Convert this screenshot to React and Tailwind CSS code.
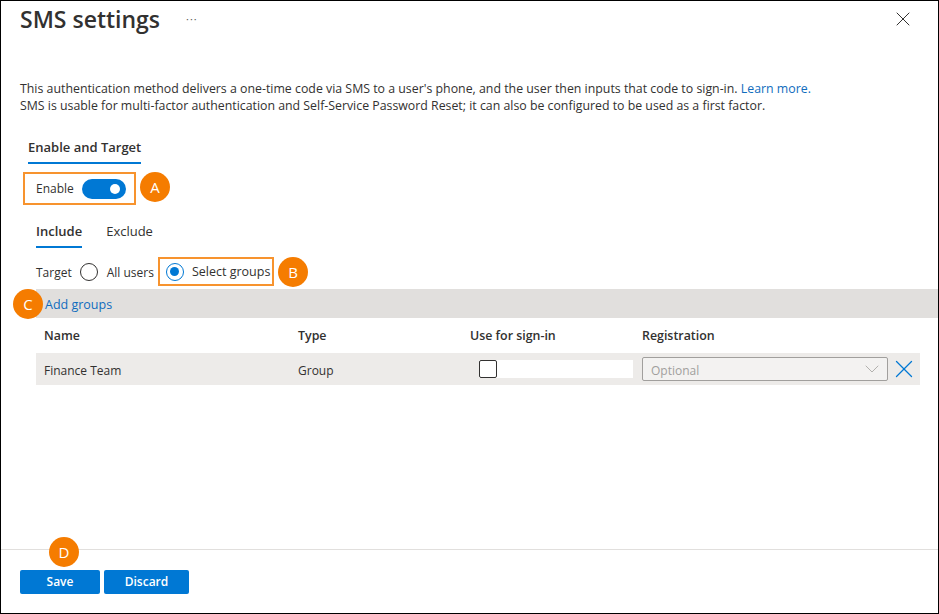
import { X, ChevronDown } from 'lucide-react';

function Badge({ letter, className }) {
    return (
        <span className={`absolute flex size-[30px] items-center justify-center rounded-full bg-[#f57c00] text-[15px] text-white ${className}`}>
            {letter}
        </span>
    );
}

export default function App() {
    return (
        <div className="flex h-[614px] w-[939px] flex-col overflow-hidden border border-black bg-white font-['Open_Sans',sans-serif] text-[12px] text-[#323130]">
            <div className="flex h-[36px] items-center pl-[19px] pr-[23px]">
                <h1 className="text-[23px] leading-none font-semibold">SMS settings</h1>
                <span className="mb-[2px] ml-[26px] text-[11px] leading-none tracking-[1px] text-[#605e5c]">···</span>
                <X size={24} strokeWidth={1} className="ml-auto text-[#323130]" />
            </div>

            <div className="flex-1 pt-[43px]">
                <div className="pl-[19px] text-[12.33px] leading-[17px]">
                    <p className="text-[12.35px]">
                        This authentication method delivers a one-time code via SMS to a user's phone, and the user then inputs that code to sign-in.{' '}
                        <a className="text-[#0f6cbd]">Learn more.</a>
                    </p>
                    <p>SMS is usable for multi-factor authentication and Self-Service Password Reset; it can also be configured to be used as a first factor.</p>
                </div>

                <div className="ml-[27px] mt-[24px] w-fit border-b-2 border-[#0078d4] pb-[6px] text-[13px] font-semibold leading-[18px]">
                    Enable and Target
                </div>

                <div className="relative ml-[22px] mt-[8px] flex h-[33px] w-[113px] items-center gap-2 border-2 border-[#f7932e] pl-[11px]">
                    <span className="pt-[1px]">Enable</span>
                    <span className="flex h-5 w-[44px] items-center justify-end rounded-full bg-[#0078d4] pr-[6px]">
                        <span className="size-[10px] rounded-full bg-white" />
                    </span>
                    <Badge letter="A" className="left-[115px] top-[-2px]" />
                </div>

                <div className="ml-[35px] mt-[17px] flex gap-[24px] text-[13px]">
                    <div className="border-b-2 border-[#0078d4] pb-[6px] font-semibold leading-[18px]">Include</div>
                    <div className="leading-[18px]">Exclude</div>
                </div>

                <div className="relative ml-[35px] mt-[9px] flex h-[29px] items-center">
                    <span className="pt-[2px]">Target</span>
                    <span className="ml-[8px] size-[18px] rounded-full border border-[#323130]" />
                    <span className="ml-[9px] pt-[2px]">All users</span>
                    <div className="ml-[4px] flex h-[29px] w-[116px] items-center border-2 border-[#f7932e] pl-[6px]">
                        <span className="flex size-[18px] items-center justify-center rounded-full border border-[#0078d4]">
                            <span className="size-[9px] rounded-full bg-[#0078d4]" />
                        </span>
                        <span className="ml-[8px] pt-[2px] text-[12.5px]">Select groups</span>
                    </div>
                    <Badge letter="B" className="left-[242px] top-0" />
                </div>

                <div className="relative ml-[35px] mt-[3px] flex h-[29px] items-center bg-[#e1dfdd] pl-[9px] pt-[3px] text-[12.5px] text-[#0f6cbd]">
                    Add groups
                    <Badge letter="C" className="left-[-23px] top-0" />
                </div>

                <div className="mr-[18px] ml-[35px]">
                    <div className="grid h-[35px] grid-cols-[254px_172px_172px_1fr] items-center pl-[8px] pt-[2px] text-[12.4px] font-semibold">
                        <span>Name</span>
                        <span>Type</span>
                        <span>Use for sign-in</span>
                        <span>Registration</span>
                    </div>
                    <div className="grid h-[32px] grid-cols-[254px_172px_172px_1fr] items-center bg-[#edebe9] pl-[8px]">
                        <span className="pt-[3px]">Finance Team</span>
                        <span className="pt-[3px]">Group</span>
                        <div className="ml-[9px] h-[18px] w-[154px] bg-white">
                            <span className="block size-[18px] rounded-[2px] border border-[#323130] bg-white" />
                        </div>
                        <div className="flex items-center">
                            <div className="flex h-[24px] w-[246px] items-center justify-between rounded-[2px] border border-[#a19f9d] bg-[#f3f2f1] pl-[8px] pr-[3px] text-[#a19f9d]">
                                <span className="pt-[3px]">Optional</span>
                                <ChevronDown size={24} strokeWidth={0.8} className="shrink-0" />
                            </div>
                            <X size={30} strokeWidth={1} className="ml-[1px] shrink-0 text-[#0078d4]" />
                        </div>
                    </div>
                </div>
            </div>

            <div className="relative flex h-[64px] gap-[4px] border-t border-[#e1dfdd] pl-[19px] pt-[20px]">
                <button className="h-[24px] w-[80px] rounded-[2px] bg-[#0078d4] font-semibold text-white">Save</button>
                <button className="h-[24px] w-[85px] rounded-[2px] bg-[#0078d4] font-semibold text-white">Discard</button>
                <Badge letter="D" className="left-[48px] top-[-13px]" />
            </div>
        </div>
    );
}
